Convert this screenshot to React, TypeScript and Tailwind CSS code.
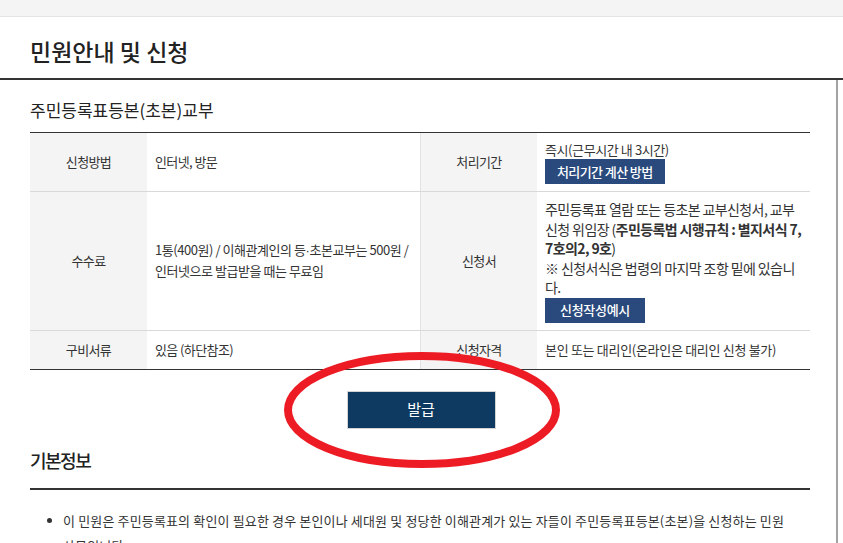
export default function App() {
  const font = { fontFamily: '"Noto Sans CJK KR", "Noto Sans", sans-serif' }
  const dot = <span style={{ fontFamily: '"Liberation Sans", sans-serif' }}>·</span>
  return (
    <div className="relative w-[843px] h-[543px] overflow-hidden bg-white text-[#333]" style={font}>
      <div className="h-[17px] bg-[#f5f4f4] border-b border-[#e4e4e4]" />

      <div className="pl-[30px] pt-[19px] pb-[12px] border-b-2 border-[#333]">
        <h1 className="text-[23px] leading-[30px] font-medium text-[#222]">민원안내 및 신청</h1>
      </div>

      <div className="flex">
        <div className="w-[836px] pl-[30px] pr-[26px]">
          <h2 className="mt-[18px] mb-[10px] text-[17px] leading-[24px] text-[#222]">
            주민등록표등본(초본)교부
          </h2>

          <div className="border-t border-b border-[#333] text-[13px] tracking-[-0.6px]">
            <div className="grid grid-cols-[117px_273px_117px_273px] border-b border-[#d9d9d9]">
              <div className="bg-[#f4f4f4] flex items-center justify-center">신청방법</div>
              <div className="flex items-center px-2">인터넷, 방문</div>
              <div className="bg-[#f4f4f4] border-l border-[#e2e2e2] flex items-center justify-center">처리기간</div>
              <div className="px-2 pt-[7px] pb-[7px]">
                <p className="leading-[19px] text-[13px] tracking-[-0.4px]">즉시(근무시간 내 3시간)</p>
                <button className="h-[25px] px-3 bg-[#2a4a7d] text-white font-medium text-[13px]">처리기간 계산 방법</button>
              </div>
            </div>

            <div className="grid grid-cols-[117px_273px_117px_273px] border-b border-[#d9d9d9]">
              <div className="bg-[#f4f4f4] flex items-center justify-center">수수료</div>
              <div className="flex flex-col justify-center px-2 leading-[20px] whitespace-nowrap tracking-[-0.45px]">
                <span>1통(400원) / 이해관계인의 등{dot}초본교부는 500원 /</span>
                <span>인터넷으로 발급받을 때는 무료임</span>
              </div>
              <div className="bg-[#f4f4f4] border-l border-[#e2e2e2] flex items-center justify-center">신청서</div>
              <div className="px-2 pt-[8px] pb-[7px] leading-[19.5px] whitespace-nowrap text-[14px] tracking-[-0.6px]">
                <p>주민등록표 열람 또는 등초본 교부신청서, 교부</p>
                <p>
                  신청 위임장 (<b className="font-bold">주민등록법 시행규칙 : 별지서식 7,</b>
                </p>
                <p>
                  <b className="font-bold">7호의2, 9호</b>)
                </p>
                <p>※ 신청서식은 법령의 마지막 조항 밑에 있습니</p>
                <p>다.</p>
                <button className="h-[25px] px-[15px] bg-[#2a4a7d] text-white font-medium text-[13px] tracking-[-0.3px]">신청작성예시</button>
              </div>
            </div>

            <div className="grid grid-cols-[117px_273px_117px_273px] h-[38px]">
              <div className="bg-[#f4f4f4] flex items-center justify-center">구비서류</div>
              <div className="flex items-center px-2">있음 (하단참조)</div>
              <div className="bg-[#f4f4f4] border-l border-[#e2e2e2] flex items-center justify-center">신청자격</div>
              <div className="flex items-center px-2 tracking-[-0.3px]">본인 또는 대리인(온라인은 대리인 신청 불가)</div>
            </div>
          </div>

          <div className="flex justify-center mt-[21px] pl-[2px]">
            <button className="w-[149px] h-[38px] bg-[#0e3a61] border border-[#d4d4d4] text-white text-[15px]">발급</button>
          </div>

          <h3 className="mt-[18px] text-[18px] leading-[26px] font-medium tracking-[-1.5px] text-[#222]">기본정보</h3>
          <div className="mt-[15px] border-t-2 border-[#333]" />

          <ul className="mt-[18px] pl-[17px] text-[13px] tracking-[0.15px] leading-[25px]">
            <li className="flex">
              <span className="mt-[10px] mr-[11px] w-[5px] h-[5px] rounded-full bg-[#333] shrink-0" />
              <span className="whitespace-nowrap">
                이 민원은 주민등록표의 확인이 필요한 경우 본인이나 세대원 및 정당한 이해관계가 있는 자들이 주민등록표등본(초본)을 신청하는 민원
                <br />
                사무입니다.
              </span>
            </li>
          </ul>
        </div>
        <div className="flex-1 border-l-2 border-[#a3a3a3] h-[470px]" />
      </div>

      <svg className="absolute left-0 top-0 pointer-events-none" width="843" height="543">
        <ellipse cx="422" cy="410" rx="134" ry="54" fill="none" stroke="#ed1c24" strokeWidth="8" />
      </svg>
    </div>
  )
}
